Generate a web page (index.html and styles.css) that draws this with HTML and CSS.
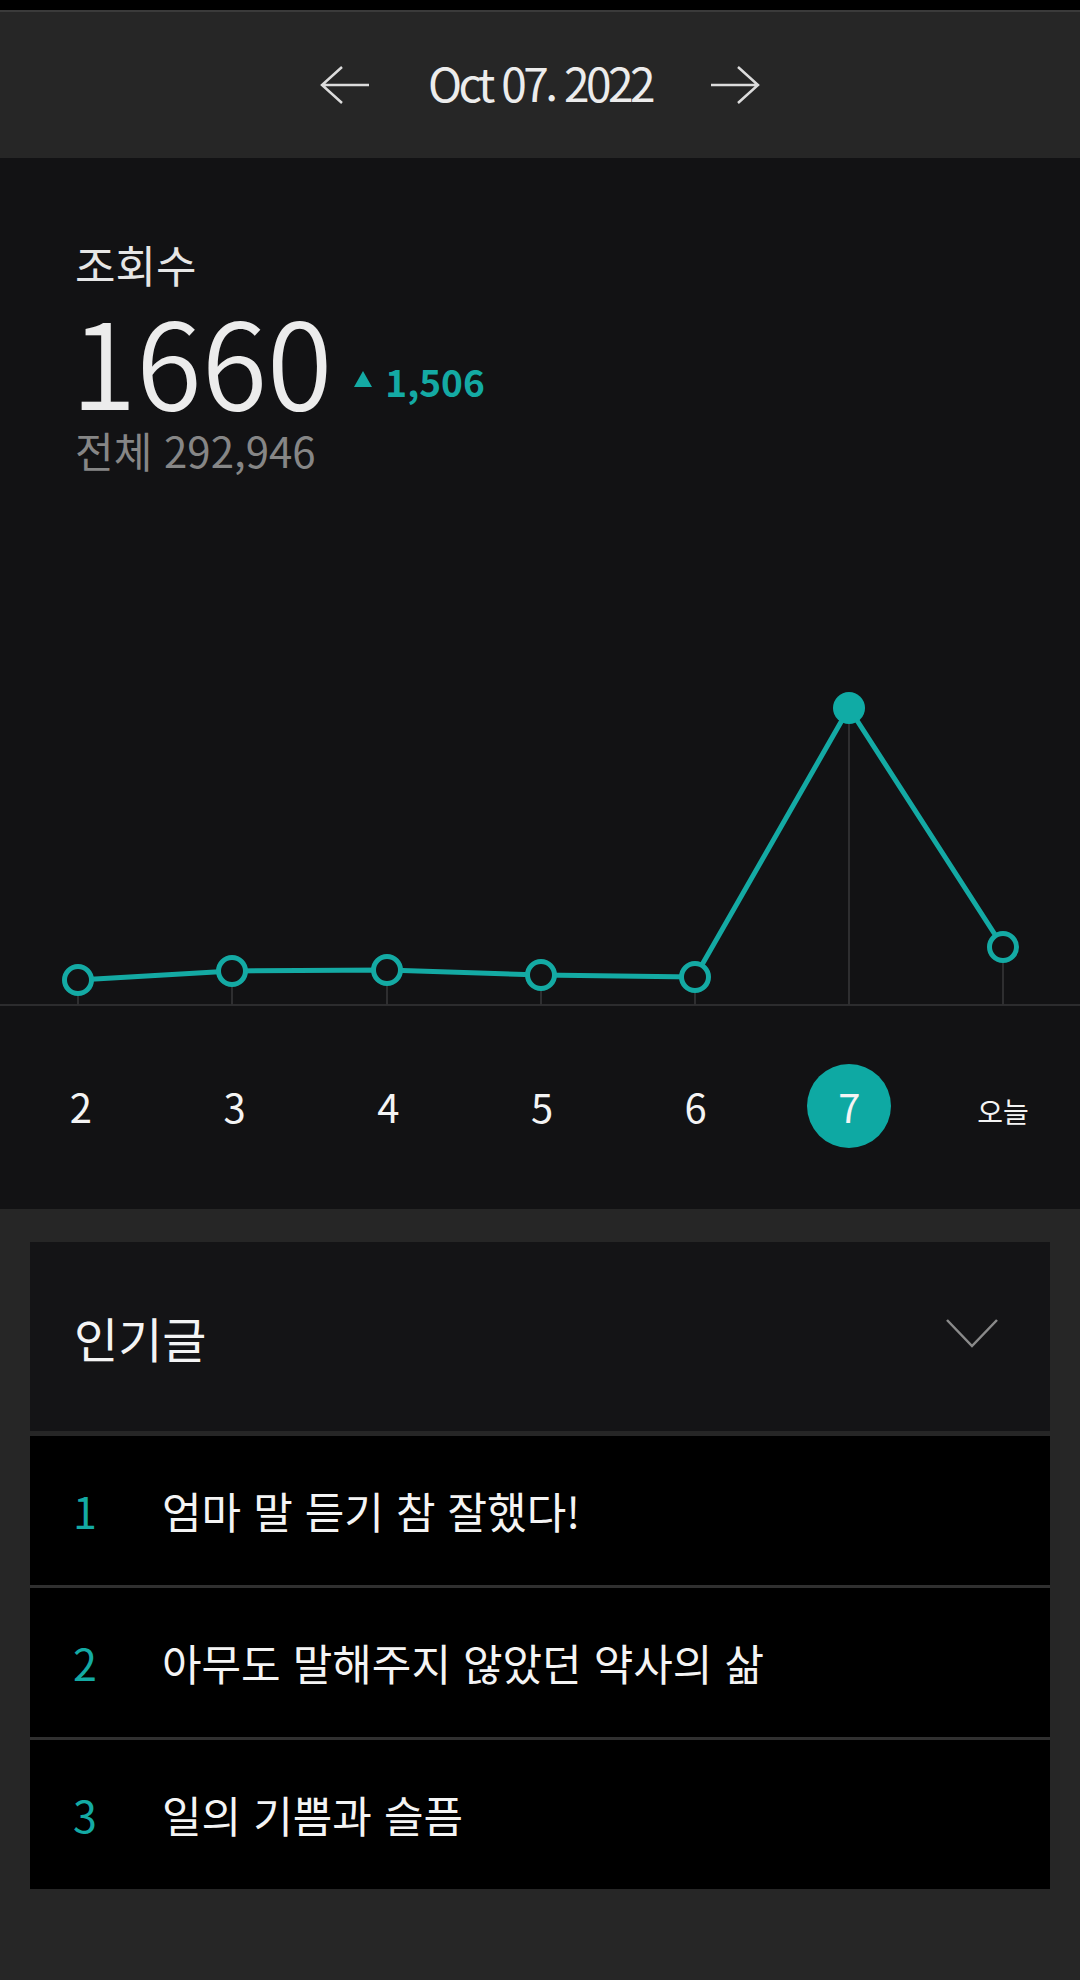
FILE: index.html
```html
<!DOCTYPE html>
<html lang="ko">
<head>
<meta charset="utf-8">
<title>조회수 통계</title>
<link rel="stylesheet" href="styles.css">
</head>
<body>
<div class="status"></div>
<header class="datebar">
  <svg class="arrow" viewBox="0 0 50 38" aria-hidden="true"><path d="M49 19H2M22 1L2 19L22 37"/></svg>
  <span class="date">Oct 07. 2022</span>
  <svg class="arrow" viewBox="0 0 50 38" aria-hidden="true"><path d="M1 19H48M28 1L48 19L28 37"/></svg>
</header>

<section class="stats">
  <div class="summary">
    <div class="label">조회수</div>
    <div class="count-row"><span class="count">1660</span><span class="delta"><svg class="tri" viewBox="0 0 20 18" aria-hidden="true"><path d="M10 1L19 17H1Z"/></svg>1,506</span></div>
    <div class="total">전체 292,946</div>
  </div>

  <svg class="chart" viewBox="0 0 1080 350" aria-hidden="true">
    <line class="axis" x1="0" y1="344" x2="1080" y2="344"/>
    <line class="tick" x1="78" y1="319" x2="78" y2="344"/>
    <line class="tick" x1="232" y1="310" x2="232" y2="344"/>
    <line class="tick" x1="387" y1="309" x2="387" y2="344"/>
    <line class="tick" x1="541" y1="314" x2="541" y2="344"/>
    <line class="tick" x1="695" y1="316" x2="695" y2="344"/>
    <line class="tick" x1="849" y1="47" x2="849" y2="344"/>
    <line class="tick" x1="1003" y1="286" x2="1003" y2="344"/>
    <polyline class="line" points="78,319 232,310 387,309 541,314 695,316 849,47 1003,286"/>
    <circle class="dot" cx="78" cy="319" r="13.5"/>
    <circle class="dot" cx="232" cy="310" r="13.5"/>
    <circle class="dot" cx="387" cy="309" r="13.5"/>
    <circle class="dot" cx="541" cy="314" r="13.5"/>
    <circle class="dot" cx="695" cy="316" r="13.5"/>
    <circle class="dot active" cx="849" cy="47" r="16"/>
    <circle class="dot" cx="1003" cy="286" r="13.5"/>
  </svg>

  <div class="days">
    <div class="day"><span>2</span></div>
    <div class="day"><span>3</span></div>
    <div class="day"><span>4</span></div>
    <div class="day"><span>5</span></div>
    <div class="day"><span>6</span></div>
    <div class="day"><span class="current">7</span></div>
    <div class="day today"><span>오늘</span></div>
  </div>
</section>

<section class="popular">
  <div class="card">
    <div class="card-head">
      <h2>인기글</h2>
      <svg class="chevron" viewBox="0 0 52 29" aria-hidden="true"><path d="M1 1L26 27L51 1"/></svg>
    </div>
    <ol class="posts">
      <li><span class="rank">1</span><span class="title">엄마 말 듣기 참 잘했다!</span></li>
      <li><span class="rank">2</span><span class="title">아무도 말해주지 않았던 약사의 삶</span></li>
      <li><span class="rank">3</span><span class="title">일의 기쁨과 슬픔</span></li>
    </ol>
  </div>
</section>
</body>
</html>
```

FILE: styles.css
```css
* { box-sizing: border-box; }

html, body {
  margin: 0;
  padding: 0;
}

body {
  width: 1080px;
  min-height: 1980px;
  background: #262626;
  font-family: "Noto Sans CJK KR", "Noto Sans", sans-serif;
  color: #f0f0f0;
}

.status {
  height: 12px;
  background: #000;
  border-bottom: 2px solid #3a3a3a;
}

.datebar {
  height: 146px;
  background: #262626;
  display: flex;
  align-items: center;
  justify-content: center;
  gap: 58px;
}

.arrow {
  width: 50px;
  height: 38px;
  fill: none;
  stroke: #dcdcdc;
  stroke-width: 2.5;
}

.date {
  font-size: 46px;
  line-height: 1;
  letter-spacing: -3.5px;
  color: #ececec;
  padding-bottom: 6px;
}

.stats {
  background: #121214;
  padding: 84px 0 61px;
}

.summary {
  padding-left: 75px;
}

.label {
  font-size: 44px;
  line-height: 1;
  color: #e6e6e6;
}

.count-row {
  margin-top: 13px;
  line-height: 1;
}

.count {
  font-size: 119px;
  font-weight: 350;
  line-height: 1;
  color: #ececec;
  margin-left: -4px;
}

.delta {
  display: inline-block;
  vertical-align: 13px;
  margin-left: 21px;
  font-size: 37px;
  font-weight: 600;
  color: #14aaa4;
}

.tri {
  width: 20px;
  height: 18px;
  fill: #14aaa4;
  vertical-align: 9px;
  margin-right: 12px;
}

.total {
  margin-top: 11px;
  font-size: 42px;
  line-height: 1;
  color: #868686;
}

.chart {
  display: block;
  width: 1080px;
  height: 350px;
  margin-top: 190px;
}

.axis {
  stroke: #2c2c2e;
  stroke-width: 2;
}

.tick {
  stroke: #2e2e30;
  stroke-width: 2;
}

.line {
  fill: none;
  stroke: #14aaa4;
  stroke-width: 5;
  stroke-linejoin: round;
}

.dot {
  fill: #121214;
  stroke: #14aaa4;
  stroke-width: 5;
}

.dot.active {
  fill: #10aba5;
  stroke: none;
}

.days {
  margin-top: 53px;
  padding-left: 4px;
  display: grid;
  grid-template-columns: repeat(7, 1fr);
  height: 84px;
}

.day {
  display: flex;
  align-items: center;
  justify-content: center;
  font-size: 40px;
  line-height: 1;
  color: #f4f4f4;
}

.day .current {
  width: 84px;
  height: 84px;
  border-radius: 50%;
  background: #0ea9a3;
  display: flex;
  align-items: center;
  justify-content: center;
}

.day.today {
  font-size: 28px;
  padding-top: 10px;
}

.popular {
  padding: 33px 30px 0;
}

.card {
  display: flex;
  flex-direction: column;
  gap: 5px;
}

.card-head {
  height: 189px;
  background: #141416;
  display: flex;
  align-items: center;
  justify-content: space-between;
  padding: 0 52px 0 44px;
}

.card-head h2 {
  margin: 0;
  font-size: 48px;
  font-weight: 400;
  line-height: 1;
  color: #f4f4f4;
}

.chevron {
  width: 52px;
  height: 29px;
  fill: none;
  stroke: #8a8a8a;
  stroke-width: 2.5;
  margin-bottom: 6px;
}

.posts {
  list-style: none;
  margin: 0;
  padding: 0;
}

.posts li {
  height: 149px;
  background: #000;
  display: flex;
  align-items: center;
  padding-left: 43px;
  font-size: 43px;
  line-height: 1;
}

.posts li + li {
  border-top: 3px solid #303030;
  height: 152px;
}

.rank {
  width: 89px;
  color: #14aaa4;
}

.title {
  color: #f4f4f4;
}
```
